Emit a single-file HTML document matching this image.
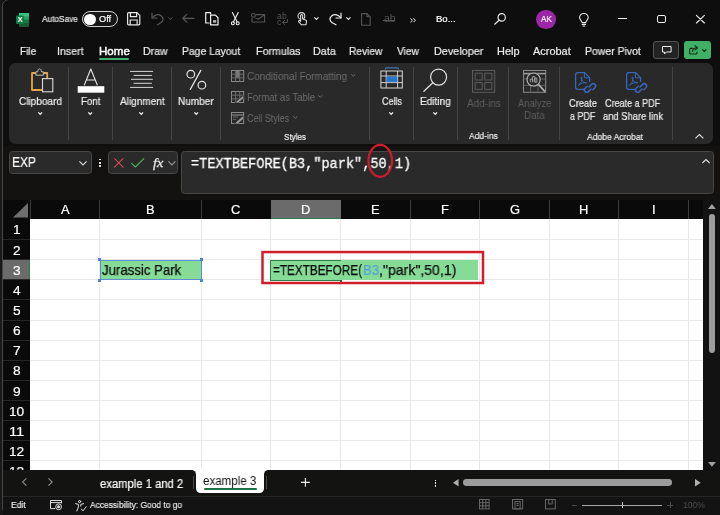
<!DOCTYPE html>
<html><head><meta charset="utf-8">
<style>
*{box-sizing:border-box;margin:0;padding:0}
html,body{width:720px;height:515px;overflow:hidden;background:#0e0e0e}
body{position:relative;font-family:"Liberation Sans",sans-serif;color:#fff;font-size:12px}
.a{position:absolute}
.t{position:absolute;white-space:nowrap;line-height:1;transform-origin:0 0;will-change:transform}
svg{position:absolute;overflow:visible}
.sep{position:absolute;width:1px;background:#444;top:67px;height:73px}
.vg{position:absolute;top:219px;height:251px;width:1px;background:#e8e8e8}
.hg{position:absolute;left:30px;width:673.3px;height:1px;background:#e8e8e8}
.chs{position:absolute;top:200px;height:19px;width:1px;background:#3c3c3c}
</style></head><body>

<!-- window left border -->
<div class="a" style="left:0;top:0;width:3px;height:515px;background:#191919"></div>
<div class="a" style="left:2.3px;top:-1px;width:724px;height:515.5px;border:1px solid #474747;border-radius:7px"></div>

<!-- TITLE BAR ICONS -->
<svg style="left:15.8px;top:12.5px" width="13" height="13.4" viewBox="0 0 13 13.4">
<rect x="3" y="0" width="10" height="13.4" rx="1.2" fill="#21a366"/>
<rect x="3" y="0" width="10" height="3.4" fill="#33c481"/>
<rect x="3" y="6.7" width="10" height="3.4" fill="#107c41"/>
<rect x="3" y="10" width="10" height="3.4" fill="#185c37"/>
<rect x="0" y="2.4" width="8" height="8.6" rx="0.8" fill="#107c41"/>
<text x="4" y="9.5" font-size="7.6" font-weight="bold" fill="#fff" text-anchor="middle" font-family="Liberation Sans, sans-serif">X</text>
</svg>
<div class="a" style="left:81.7px;top:11.3px;width:36px;height:15.6px;border:1.2px solid #d0d0d0;border-radius:8px;background:#161616"></div>
<div class="a" style="left:84.2px;top:13.6px;width:11.4px;height:11.4px;border-radius:6px;background:#fff"></div>
<!-- save -->
<svg style="left:127px;top:12px" width="13.4" height="13.4" viewBox="0 0 13.4 13.4" fill="none" stroke="#e8e8e8" stroke-width="1.2">
<path d="M0.6 1.6 a1 1 0 0 1 1 -1 H10 L12.8 3.4 V11.8 a1 1 0 0 1 -1 1 H1.6 a1 1 0 0 1 -1 -1 Z"/>
<path d="M3.4 0.6 V4.6 H9.6 V0.6"/><path d="M3.2 12.8 V8 H10.2 V12.8"/>
</svg>
<!-- undo dim -->
<svg style="left:150.8px;top:12px" width="13" height="13" viewBox="0 0 13 13" fill="none" stroke="#595959" stroke-width="1.2" stroke-linecap="round" stroke-linejoin="round">
<path d="M1 1.2 V6 H6"/><path d="M1.2 5.8 C3.2 2.6 7.6 1.6 10.4 4 C13 6.4 12.2 9.2 9.8 10.8 L6.4 12.8"/>
</svg>
<svg style="left:168px;top:17px" width="4.6" height="3" viewBox="0 0 4.6 3" fill="none" stroke="#595959" stroke-width="1"><path d="M0.3 0.4 L2.3 2.4 L4.3 0.4"/></svg>
<!-- back arrow dim -->
<svg style="left:181.7px;top:14px" width="12.6" height="8.6" viewBox="0 0 12.6 8.6" fill="none" stroke="#595959" stroke-width="1.2" stroke-linecap="round" stroke-linejoin="round"><path d="M12 4.3 H0.8 M4.8 0.4 L0.8 4.3 L4.8 8.2"/></svg>
<!-- paste/copy -->
<svg style="left:204.7px;top:12px" width="13.6" height="13.4" viewBox="0 0 13.6 13.4" fill="none" stroke="#f0f0f0" stroke-width="1.2" stroke-linejoin="round">
<path d="M4.6 11 H0.7 V0.7 H5.6 V2.6"/><path d="M5.6 3.2 H10.4 L13 5.8 V12.8 H5.6 Z" fill="#0e0e0e"/><rect x="8" y="8.2" width="3.2" height="2.4" fill="#bbb" stroke="none"/>
</svg>
<!-- scissors -->
<svg style="left:230.8px;top:12px" width="8.6" height="13.4" viewBox="0 0 8.6 13.4" fill="none" stroke="#f0f0f0" stroke-width="1.1" stroke-linecap="round">
<path d="M1.4 0.5 L6.2 10"/><path d="M7.2 0.5 L2.4 10"/><circle cx="1.9" cy="11.3" r="1.5"/><circle cx="6.7" cy="11.3" r="1.5"/>
</svg>
<!-- email dim -->
<svg style="left:250.8px;top:13px" width="14.2" height="9.6" viewBox="0 0 14.2 9.6" fill="none" stroke="#555" stroke-width="1.1">
<path d="M5 1.6 H13.6 V9 H1 V5"/><path d="M4.4 5 L7.4 6.2 L13.6 1.8"/><circle cx="2.4" cy="2.4" r="1.9"/>
</svg>
<!-- ab c dim -->
<div class="t" style="left:277px;top:11.6px;font-size:8.6px;color:#555;letter-spacing:.2px">ab</div>
<div class="t" style="left:277.4px;top:17.6px;font-size:8.6px;color:#555">c</div>
<svg style="left:282.4px;top:18.6px" width="6" height="6.4" viewBox="0 0 6 6.4" fill="none" stroke="#555" stroke-width="1" stroke-linecap="round" stroke-linejoin="round"><path d="M5.4 0.4 V3.4 H0.8 M2.6 1.4 L0.6 3.4 L2.6 5.4"/></svg>
<!-- touch -->
<svg style="left:296.7px;top:12px" width="10" height="13.4" viewBox="0 0 10 13.4" fill="none" stroke="#d8d8d8" stroke-width="1.1" stroke-linecap="round" stroke-linejoin="round">
<circle cx="4.4" cy="4" r="3.4"/><path d="M3.6 9.4 V3.6 a1 1 0 0 1 2 0 V7 L8.6 8 a1.2 1.2 0 0 1 .9 1.4 L9 12.8 H4.4 L1.6 9.6 a.9 .9 0 0 1 1.4 -1 Z" fill="#0e0e0e"/>
</svg>
<svg style="left:314px;top:17.4px" width="4.8" height="3" viewBox="0 0 4.8 3" fill="none" stroke="#e0e0e0" stroke-width="1.1"><path d="M0.3 0.4 L2.4 2.5 L4.5 0.4"/></svg>
<!-- redo -->
<svg style="left:328.8px;top:12px" width="12.6" height="13" viewBox="0 0 12.6 13" fill="none" stroke="#ececec" stroke-width="1.2" stroke-linecap="round" stroke-linejoin="round">
<path d="M12 1.2 V6 H7"/><path d="M11.8 5.8 C9.8 2.6 5.4 1.6 2.6 4 C0 6.4 0.8 9.2 3.2 10.8 L7 12.8"/>
</svg>
<svg style="left:345.8px;top:17.4px" width="4.8" height="3" viewBox="0 0 4.8 3" fill="none" stroke="#e0e0e0" stroke-width="1.1"><path d="M0.3 0.4 L2.4 2.5 L4.5 0.4"/></svg>
<!-- doc dim -->
<svg style="left:361px;top:12.5px" width="9.8" height="12.8" viewBox="0 0 9.8 12.8" fill="none" stroke="#555" stroke-width="1.1" stroke-linejoin="round"><path d="M0.6 0.6 H6 L9.2 3.8 V12.2 H0.6 Z"/><path d="M6 0.6 V3.8 H9.2"/></svg>
<!-- ab strike dim -->
<div class="t" style="left:383.6px;top:13.4px;font-size:10.5px;color:#555">ab</div>
<div class="a" style="left:382.5px;top:19.6px;width:12.8px;height:1px;background:#555"></div>
<!-- >> -->
<svg style="left:409.7px;top:17.5px" width="6.2" height="4.6" viewBox="0 0 6.2 4.6" fill="none" stroke="#f0f0f0" stroke-width="1"><path d="M0.4 0.3 L2.4 2.3 L0.4 4.3 M3.4 0.3 L5.4 2.3 L3.4 4.3"/></svg>
<!-- search -->
<svg style="left:494.2px;top:13.3px" width="12.2" height="11.8" viewBox="0 0 12.2 11.8" fill="none" stroke="#e8e8e8" stroke-width="1.2" stroke-linecap="round"><circle cx="7.7" cy="4.4" r="3.7"/><path d="M5 7.2 L0.7 11.2"/></svg>
<!-- avatar -->
<div class="a" style="left:536.4px;top:9.5px;width:19.6px;height:19.6px;border-radius:10px;background:#9b26a8"></div>
<!-- bulb -->
<svg style="left:579px;top:12.5px" width="9.8" height="13.4" viewBox="0 0 9.8 13.4" fill="none" stroke="#e8e8e8" stroke-width="1.1" stroke-linecap="round" stroke-linejoin="round">
<path d="M3 9.6 C3 7.6 0.6 7 0.6 4.6 A4.3 4.1 0 0 1 9.2 4.6 C9.2 7 6.8 7.6 6.8 9.6 Z"/><path d="M3.2 11.4 H6.6 M4 13 H5.8"/>
</svg>
<!-- window controls -->
<div class="a" style="left:618px;top:17.8px;width:8.8px;height:1.1px;background:#f0f0f0"></div>
<div class="a" style="left:656.7px;top:14.7px;width:9.2px;height:8.4px;border:1.2px solid #f0f0f0;border-radius:2px"></div>
<svg style="left:696.3px;top:14.7px" width="8.8" height="8.4" viewBox="0 0 8.8 8.4" stroke="#f0f0f0" stroke-width="1.1" stroke-linecap="round"><path d="M0.4 0.4 L8.4 8 M8.4 0.4 L0.4 8"/></svg>

<!-- TABS extras -->
<div class="a" style="left:99.3px;top:58.4px;width:30px;height:1.8px;background:#3fae6e;border-radius:1px"></div>
<div class="a" style="left:653.3px;top:40.7px;width:26px;height:18.6px;border:1px solid #555;border-radius:3px;background:#232323"></div>
<svg style="left:661.6px;top:46px" width="9.6" height="8.6" viewBox="0 0 9.6 8.6" fill="none" stroke="#f0f0f0" stroke-width="1" stroke-linejoin="round"><path d="M0.5 0.5 H9.1 V6 H4.4 L2.4 8 V6 H0.5 Z"/></svg>
<div class="a" style="left:684px;top:40.7px;width:26.8px;height:18.6px;border-radius:3px;background:#3fb065"></div>
<svg style="left:688.6px;top:45.2px" width="10" height="9.6" viewBox="0 0 10 9.6" fill="none" stroke="#0c2a16" stroke-width="1.1" stroke-linecap="round" stroke-linejoin="round"><path d="M3.4 3.4 H1.6 a1 1 0 0 0 -1 1 V8 a1 1 0 0 0 1 1 H7 a1 1 0 0 0 1 -1 V7"/><path d="M3.6 6.4 C3.8 4 5.4 2.8 7.2 2.8 M6 0.6 L8.6 2.8 L6 5"/></svg>
<svg style="left:702.4px;top:48.6px" width="4.6" height="3" viewBox="0 0 4.6 3" fill="none" stroke="#0c2a16" stroke-width="1.1"><path d="M0.3 0.4 L2.3 2.4 L4.3 0.4"/></svg>

<!-- RIBBON -->
<div class="a" style="left:9px;top:63px;width:704px;height:81px;background:#292929;border-radius:6.5px"></div>
<div class="sep" style="left:68px"></div>
<div class="sep" style="left:112px"></div>
<div class="sep" style="left:171px"></div>
<div class="sep" style="left:220px"></div>
<div class="sep" style="left:369px"></div>
<div class="sep" style="left:413px"></div>
<div class="sep" style="left:457px"></div>
<div class="sep" style="left:508px"></div>
<div class="sep" style="left:559px"></div>
<div class="sep" style="left:671.5px"></div>
<!-- clipboard -->
<svg style="left:30px;top:67px" width="25" height="27" viewBox="30 67 25 27" fill="none">
<path d="M37 73 H32 V90 H42" stroke="#e9a53f" stroke-width="1.8" stroke-linejoin="round"/>
<path d="M42.4 73 H47.2 V78" stroke="#e9a53f" stroke-width="1.8" stroke-linejoin="round"/>
<path d="M35.8 75.2 V71.8 H37.8 C37.8 70 38.5 68.8 39.6 68.8 C40.7 68.8 41.4 70 41.4 71.8 H43.4 V75.2 Z" stroke="#bdbdbd" stroke-width="1" fill="#292929" stroke-linejoin="round"/>
<rect x="42.5" y="78.6" width="10.3" height="13.2" stroke="#dadada" stroke-width="1.1" fill="#2d2d2d"/>
</svg>
<svg style="left:38px;top:112.4px" width="4.4" height="2.8" viewBox="0 0 4.4 2.8" fill="none" stroke="#f0f0f0" stroke-width="1.25"><path d="M0.3 0.4 L2.2 2.3 L4.1 0.4"/></svg>
<!-- font -->
<svg style="left:77px;top:67px" width="28" height="27" viewBox="77 67 28 27" fill="none">
<path d="M84.2 85.3 L90.8 69 L97.4 85.3 M86.4 80 H95.2" stroke="#e4e4e4" stroke-width="1.1" stroke-linejoin="round"/>
<rect x="77.7" y="86.2" width="26.6" height="6.5" fill="#fff"/>
</svg>
<svg style="left:88.2px;top:112.4px" width="4.4" height="2.8" viewBox="0 0 4.4 2.8" fill="none" stroke="#f0f0f0" stroke-width="1.25"><path d="M0.3 0.4 L2.2 2.3 L4.1 0.4"/></svg>
<!-- alignment -->
<svg style="left:129px;top:69px" width="26" height="21" viewBox="129 69 26 21" stroke="#d6d6d6" stroke-width="1">
<path d="M130.1 71.4 H153.1 M133.6 75.4 H151.9 M131 79.3 H152.8 M133.6 83.3 H151.9 M130.1 87.4 H153.1"/>
</svg>
<svg style="left:139.2px;top:112.4px" width="4.4" height="2.8" viewBox="0 0 4.4 2.8" fill="none" stroke="#f0f0f0" stroke-width="1.25"><path d="M0.3 0.4 L2.2 2.3 L4.1 0.4"/></svg>
<!-- percent -->
<svg style="left:185px;top:68px" width="23" height="23" viewBox="185 68 23 23" fill="none" stroke="#e6e6e6" stroke-width="1.2" stroke-linecap="round">
<circle cx="190.8" cy="74.2" r="3.8"/><circle cx="201.9" cy="85.2" r="3.8"/><path d="M200.8 70.4 L190.3 89.4"/>
</svg>
<svg style="left:193.5px;top:112.4px" width="4.4" height="2.8" viewBox="0 0 4.4 2.8" fill="none" stroke="#f0f0f0" stroke-width="1.25"><path d="M0.3 0.4 L2.2 2.3 L4.1 0.4"/></svg>
<!-- styles small icons -->
<svg style="left:230.8px;top:70px" width="13.2" height="12" viewBox="0 0 13.2 12" fill="none" stroke="#8a8a8a" stroke-width="1">
<rect x="0.5" y="0.5" width="12.2" height="11"/><path d="M0.5 4.2 H12.7 M0.5 7.9 H12.7 M4.6 0.5 V11.5 M8.7 0.5 V11.5" stroke="#6a6a6a"/><rect x="5" y="1" width="3.4" height="6.6" fill="#777" stroke="none"/>
</svg>
<svg style="left:230.8px;top:91.3px" width="13.2" height="12" viewBox="0 0 13.2 12" fill="none" stroke="#8a8a8a" stroke-width="1">
<rect x="0.5" y="0.5" width="12.2" height="11"/><path d="M0.5 4.2 H12.7 M0.5 7.9 H12.7 M4.6 0.5 V11.5 M8.7 0.5 V11.5" stroke="#6a6a6a"/><path d="M4 11.5 L12.2 4.4 L13 7 L7 12 Z" fill="#999" stroke="#292929" stroke-width=".6"/>
</svg>
<svg style="left:230.8px;top:112.2px" width="13.2" height="12" viewBox="0 0 13.2 12" fill="none" stroke="#8a8a8a" stroke-width="1">
<rect x="0.5" y="0.5" width="12.2" height="11"/><path d="M0.5 3 H12.7" stroke="#9a9a9a"/><path d="M3.4 11.5 L12 3.8 L13 6.6 L6.6 12 Z" fill="#999" stroke="#292929" stroke-width=".6"/><path d="M2 5 H7 M2 7.4 H5" stroke="#666"/>
</svg>
<svg style="left:350.8px;top:74.4px" width="4.6" height="2.8" viewBox="0 0 4.6 2.8" fill="none" stroke="#707070" stroke-width="1"><path d="M0.3 0.4 L2.3 2.3 L4.3 0.4"/></svg>
<svg style="left:317.9px;top:95.4px" width="4.6" height="2.8" viewBox="0 0 4.6 2.8" fill="none" stroke="#707070" stroke-width="1"><path d="M0.3 0.4 L2.3 2.3 L4.3 0.4"/></svg>
<svg style="left:292.9px;top:116.4px" width="4.6" height="2.8" viewBox="0 0 4.6 2.8" fill="none" stroke="#707070" stroke-width="1"><path d="M0.3 0.4 L2.3 2.3 L4.3 0.4"/></svg>
<!-- cells -->
<svg style="left:379px;top:66px" width="25" height="24" viewBox="379 66 25 24" fill="none">
<path d="M385.6 69.4 V67.9 H398.2 V69.4" stroke="#3b8ad8" stroke-width="1"/>
<rect x="380.9" y="71" width="21.4" height="17" stroke="#d8d8d8" stroke-width="1"/>
<path d="M380.9 76 H402.3 M380.9 82.6 H402.3 M386.2 71 V88 M397.6 71 V88" stroke="#cfcfcf" stroke-width="1"/>
<rect x="386.7" y="76.5" width="10.4" height="5.6" fill="#2278cf"/>
</svg>
<svg style="left:389.2px;top:112.4px" width="4.4" height="2.8" viewBox="0 0 4.4 2.8" fill="none" stroke="#f0f0f0" stroke-width="1.25"><path d="M0.3 0.4 L2.2 2.3 L4.1 0.4"/></svg>
<!-- editing -->
<svg style="left:422px;top:67px" width="27" height="26" viewBox="422 67 27 26" fill="none" stroke="#e2e2e2" stroke-width="1.2" stroke-linecap="round">
<circle cx="438.6" cy="77.1" r="8"/><path d="M432.8 82.8 L423.9 91.3"/>
</svg>
<svg style="left:433.2px;top:112.4px" width="4.4" height="2.8" viewBox="0 0 4.4 2.8" fill="none" stroke="#f0f0f0" stroke-width="1.25"><path d="M0.3 0.4 L2.2 2.3 L4.1 0.4"/></svg>
<!-- add-ins dim -->
<svg style="left:472px;top:70px" width="23.2" height="22.8" viewBox="0 0 23.2 22.8" fill="none" stroke="#5c5c5c" stroke-width="1">
<rect x="0.5" y="0.5" width="22.2" height="21.8"/><rect x="3.2" y="3.2" width="7" height="6.8"/><rect x="12.8" y="3.2" width="7" height="6.8"/><rect x="3.2" y="12.6" width="7" height="6.8"/><rect x="12.8" y="12.6" width="7" height="6.8"/>
</svg>
<!-- analyze data -->
<svg style="left:522.6px;top:70px" width="23.2" height="22.8" viewBox="0 0 23.2 22.8" fill="none" stroke="#7a7a7a" stroke-width="1">
<rect x="0.5" y="0.5" width="22.2" height="21.8" stroke="#8a8a8a"/><path d="M0.5 3.6 H22.7" stroke="#9a9a9a" stroke-width="1.6"/><path d="M0.5 9 H22.7 M0.5 15.4 H22.7 M7.6 3.6 V22.3 M15 3.6 V22.3" stroke="#5e5e5e"/>
<circle cx="10.6" cy="9.6" r="6.6" fill="#292929" stroke="#b0b0b0" stroke-width="1.2"/><path d="M15.4 14.4 L22 21.6" stroke="#b0b0b0" stroke-width="1.6"/>
<path d="M7.4 12.2 V9 H9.6 V12.2 M9.6 12.2 V6.6 H11.8 V12.2 M11.8 12.2 V8.2 H13.8 V12.2 Z" stroke="#a8a8a8" stroke-width=".9"/>
</svg>
<!-- pdf icons -->
<svg style="left:574.5px;top:71.5px" width="21.6" height="23" viewBox="0 0 21.6 23" fill="none" stroke="#3768bb" stroke-width="1.3" stroke-linecap="round" stroke-linejoin="round">
<path d="M9 17.4 H2.6 a2 2 0 0 1 -2 -2 V2.6 a2 2 0 0 1 2 -2 H9.6 L14.6 5.6 V9.4"/><path d="M9.4 0.8 V5.8 H14.4" stroke-width="1"/>
<path d="M3.6 13.2 C6 11.6 7.2 8.4 7 5.6 C6.9 4.4 5.8 4.6 6 5.8 C6.4 8.2 8.4 10.6 11 11.2 C12 11.4 12 10.4 11 10.4 C8.6 10.4 5.2 11.6 3.6 13.2 Z" stroke-width=".9"/>
<path d="M14 15 L16.6 12.4 a2.3 2.3 0 0 1 3.3 3.3 L17.8 17.8 M16 17 L13.4 19.6 a2.3 2.3 0 0 1 -3.3 -3.3 L12.2 14.2" stroke-width="1.5"/>
</svg>
<svg style="left:625.6px;top:71.5px" width="21.6" height="23" viewBox="0 0 21.6 23" fill="none" stroke="#3768bb" stroke-width="1.3" stroke-linecap="round" stroke-linejoin="round">
<path d="M9 17.4 H2.6 a2 2 0 0 1 -2 -2 V2.6 a2 2 0 0 1 2 -2 H9.6 L14.6 5.6 V9.4"/><path d="M9.4 0.8 V5.8 H14.4" stroke-width="1"/>
<path d="M3.6 13.2 C6 11.6 7.2 8.4 7 5.6 C6.9 4.4 5.8 4.6 6 5.8 C6.4 8.2 8.4 10.6 11 11.2 C12 11.4 12 10.4 11 10.4 C8.6 10.4 5.2 11.6 3.6 13.2 Z" stroke-width=".9"/>
<path d="M14 15 L16.6 12.4 a2.3 2.3 0 0 1 3.3 3.3 L17.8 17.8 M16 17 L13.4 19.6 a2.3 2.3 0 0 1 -3.3 -3.3 L12.2 14.2" stroke-width="1.5"/>
</svg>
<!-- collapse chevron -->
<svg style="left:695.2px;top:133.8px" width="8.8" height="4.8" viewBox="0 0 8.8 4.8" fill="none" stroke="#e0e0e0" stroke-width="1.1"><path d="M0.4 4.4 L4.4 0.5 L8.4 4.4"/></svg>


<!-- FORMULA BAR -->
<div class="a" style="left:3px;top:146px;width:717px;height:54px;background:#131210"></div>
<div class="a" style="left:9.2px;top:151.3px;width:82.8px;height:23px;background:#2a2a2a;border:1px solid #474747;border-radius:3.5px"></div>
<svg style="left:79.2px;top:161.3px" width="8" height="4.6" viewBox="0 0 8 4.6" fill="none" stroke="#d8d8d8" stroke-width="1.1"><path d="M0.4 0.4 L4 4 L7.6 0.4"/></svg>
<div class="a" style="left:99px;top:158.8px;width:1.5px;height:1.5px;background:#e0e0e0"></div>
<div class="a" style="left:99px;top:162.1px;width:1.5px;height:1.5px;background:#e0e0e0"></div>
<div class="a" style="left:99px;top:165.4px;width:1.5px;height:1.5px;background:#e0e0e0"></div>
<div class="a" style="left:108px;top:151.3px;width:69.6px;height:23px;background:#2a2a2a;border:1px solid #474747;border-radius:3.5px"></div>
<svg style="left:113.7px;top:158px" width="9.6" height="9.6" viewBox="0 0 9.6 9.6" stroke="#e05050" stroke-width="1.05" stroke-linecap="round"><path d="M0.5 0.5 L9.1 9.1 M9.1 0.5 L0.5 9.1"/></svg>
<svg style="left:131.3px;top:157.5px" width="13.4" height="9.6" viewBox="0 0 13.4 9.6" fill="none" stroke="#4fb35a" stroke-width="1.1" stroke-linecap="round" stroke-linejoin="round"><path d="M0.6 5.4 L4.4 9 L12.8 0.6"/></svg>
<svg style="left:168px;top:161.2px" width="7.8" height="4.6" viewBox="0 0 7.8 4.6" fill="none" stroke="#9a9a9a" stroke-width="1.1"><path d="M0.4 0.4 L3.9 3.9 L7.4 0.4"/></svg>
<div class="a" style="left:181.3px;top:151.3px;width:533px;height:42.8px;background:#2a2a2a;border:1px solid #474747;border-radius:3.5px"></div>
<svg style="left:702px;top:159.2px" width="8" height="4.4" viewBox="0 0 8 4.4" fill="none" stroke="#e0e0e0" stroke-width="1.1"><path d="M0.4 4 L4 0.5 L7.6 4"/></svg>

<!-- GRID -->
<div class="a" style="left:3px;top:200px;width:717px;height:19.4px;background:#0a0a0a"></div>
<div class="a" style="left:3px;top:219px;width:27.3px;height:251px;background:#0a0a0a"></div>
<div class="a" style="left:30.3px;top:219.2px;width:673px;height:250.8px;background:#fff"></div>
<div class="a" style="left:703.3px;top:200px;width:16.7px;height:270px;background:#121212"></div>
<svg style="left:13px;top:203px" width="15" height="14.5" viewBox="0 0 15 14.5"><path d="M15 0 V14.5 H0 Z" fill="#6e6e6e"/></svg>
<div class="a" style="left:270.5px;top:200px;width:70.3px;height:19.3px;background:#6b6b6b"></div>
<div class="a" style="left:270.5px;top:217.6px;width:70.3px;height:1.8px;background:#2d7a50"></div>
<div class="a" style="left:3px;top:259.5px;width:27.3px;height:20.2px;background:#6b6b6b"></div>
<div class="a" style="left:28.8px;top:259.5px;width:1.6px;height:20.2px;background:#2d7a50"></div>
<div class="a" style="left:3px;top:239.0px;width:27px;height:1px;background:#262626"></div>
<div class="a" style="left:3px;top:259.0px;width:27px;height:1px;background:#262626"></div>
<div class="a" style="left:3px;top:279.2px;width:27px;height:1px;background:#262626"></div>
<div class="a" style="left:3px;top:299.3px;width:27px;height:1px;background:#262626"></div>
<div class="a" style="left:3px;top:319.5px;width:27px;height:1px;background:#262626"></div>
<div class="a" style="left:3px;top:339.5px;width:27px;height:1px;background:#262626"></div>
<div class="a" style="left:3px;top:359.7px;width:27px;height:1px;background:#262626"></div>
<div class="a" style="left:3px;top:379.8px;width:27px;height:1px;background:#262626"></div>
<div class="a" style="left:3px;top:399.9px;width:27px;height:1px;background:#262626"></div>
<div class="a" style="left:3px;top:420.0px;width:27px;height:1px;background:#262626"></div>
<div class="a" style="left:3px;top:440.1px;width:27px;height:1px;background:#262626"></div>
<div class="a" style="left:3px;top:460.2px;width:27px;height:1px;background:#262626"></div>
<div class="chs" style="left:30px"></div>
<div class="chs" style="left:99px"></div>
<div class="chs" style="left:201px"></div>
<div class="chs" style="left:549px"></div>
<div class="chs" style="left:410px"></div>
<div class="chs" style="left:479px"></div>
<div class="chs" style="left:618px"></div>
<div class="chs" style="left:688px"></div>
<div class="vg" style="left:99.0px"></div>
<div class="vg" style="left:200.8px"></div>
<div class="vg" style="left:270.0px"></div>
<div class="vg" style="left:340.3px"></div>
<div class="vg" style="left:409.5px"></div>
<div class="vg" style="left:479.0px"></div>
<div class="vg" style="left:548.5px"></div>
<div class="vg" style="left:618.2px"></div>
<div class="vg" style="left:687.8px"></div>
<div class="hg" style="top:239.0px"></div>
<div class="hg" style="top:259.0px"></div>
<div class="hg" style="top:279.2px"></div>
<div class="hg" style="top:299.3px"></div>
<div class="hg" style="top:319.5px"></div>
<div class="hg" style="top:339.5px"></div>
<div class="hg" style="top:359.7px"></div>
<div class="hg" style="top:379.8px"></div>
<div class="hg" style="top:399.9px"></div>
<div class="hg" style="top:420.0px"></div>
<div class="hg" style="top:440.1px"></div>
<div class="hg" style="top:460.2px"></div>

<!-- B3 -->
<div class="a" style="left:99.5px;top:259.5px;width:102px;height:20.6px;background:#86dc97;border:1px solid #5a8fd2"></div>
<div class="a" style="left:98.2px;top:258.2px;width:3px;height:3px;background:#4f84cc"></div>
<div class="a" style="left:200px;top:258.2px;width:3px;height:3px;background:#4f84cc"></div>
<div class="a" style="left:98.2px;top:278.6px;width:3px;height:3px;background:#4f84cc"></div>
<div class="a" style="left:200px;top:278.6px;width:3px;height:3px;background:#4f84cc"></div>
<!-- D3 edit -->
<div class="a" style="left:270.3px;top:259.7px;width:207.7px;height:20.6px;background:#86dc97"></div>
<div class="a" style="left:270.3px;top:259.5px;width:70.6px;height:21px;border:1.2px solid #2f8247;border-right:none"></div>
<div class="a" style="left:339.8px;top:279.8px;width:2.2px;height:2.2px;background:#1e6b3a"></div>

<!-- v scrollbar -->
<svg style="left:708px;top:204.2px" width="7.8" height="5" viewBox="0 0 7.8 5"><path d="M0 5 L3.9 0 L7.8 5 Z" fill="#a0a0a0"/></svg>
<div class="a" style="left:708.7px;top:214.2px;width:6.3px;height:138.4px;border-radius:3.2px;background:#9c9c9c"></div>
<svg style="left:707.9px;top:462.3px" width="7.9" height="4.8" viewBox="0 0 7.9 4.8"><path d="M0 0 L3.95 4.8 L7.9 0 Z" fill="#a0a0a0"/></svg>

<!-- SHEET TABS -->
<div class="a" style="left:190px;top:469px;width:80px;height:8px;background:#fff"></div>
<div class="a" style="left:3px;top:470px;width:193.3px;height:26.3px;background:#131411;border-top-right-radius:4.5px"></div>
<div class="a" style="left:263.8px;top:470px;width:456.2px;height:26.3px;background:#131411;border-top-left-radius:4.5px"></div>
<div class="a" style="left:190px;top:490px;width:80px;height:6.3px;background:#131411"></div>
<svg style="left:21.9px;top:478.3px" width="4.8" height="8" viewBox="0 0 4.8 8" fill="none" stroke="#8c8c8c" stroke-width="1.1"><path d="M4.4 0.4 L0.6 4 L4.4 7.6"/></svg>
<svg style="left:48.3px;top:478.3px" width="4.8" height="8" viewBox="0 0 4.8 8" fill="none" stroke="#8c8c8c" stroke-width="1.1"><path d="M0.4 0.4 L4.2 4 L0.4 7.6"/></svg>
<div class="a" style="left:193.3px;top:476px;width:1px;height:13.4px;background:#4c4c4c"></div>
<div class="a" style="left:196.3px;top:469px;width:67.5px;height:23.5px;background:#fff;border-radius:0 0 4.5px 4.5px"></div>
<div class="a" style="left:203.5px;top:488px;width:53px;height:2px;background:#1f7145;border-radius:1px"></div>
<div class="a" style="left:266.3px;top:476px;width:1px;height:13.4px;background:#4c4c4c"></div>
<svg style="left:301.3px;top:478.1px" width="8.8" height="8.8" viewBox="0 0 8.8 8.8" stroke="#f0f0f0" stroke-width="1.1"><path d="M4.4 0 V8.8 M0 4.4 H8.8"/></svg>
<div class="a" style="left:434.9px;top:479.6px;width:1.5px;height:1.5px;background:#f0f0f0"></div>
<div class="a" style="left:434.9px;top:482.4px;width:1.5px;height:1.5px;background:#f0f0f0"></div>
<div class="a" style="left:434.9px;top:485.2px;width:1.5px;height:1.5px;background:#f0f0f0"></div>
<svg style="left:452.9px;top:479px" width="5.6" height="7.4" viewBox="0 0 5.6 7.4"><path d="M5.6 0 V7.4 L0 3.7 Z" fill="#b0b0b0"/></svg>
<div class="a" style="left:462.7px;top:479px;width:209px;height:6.8px;border-radius:3.4px;background:#9c9c9c"></div>
<svg style="left:695px;top:479px" width="5.8" height="7.4" viewBox="0 0 5.8 7.4"><path d="M0 0 V7.4 L5.8 3.7 Z" fill="#b0b0b0"/></svg>

<!-- STATUS -->
<div class="a" style="left:3px;top:496.3px;width:717px;height:18.7px;background:#131313"></div>
<div class="a" style="left:3px;top:496px;width:717px;height:1px;background:#262626"></div>
<!-- macro icon -->
<svg style="left:50px;top:500.4px" width="12.2" height="10" viewBox="0 0 12.2 10" fill="none" stroke="#e0e0e0" stroke-width="1">
<path d="M5 8.6 H0.5 V0.5 H11.5 V3.4 M0.5 2.6 H11.5"/><circle cx="8.6" cy="6.8" r="2.9"/><circle cx="8.6" cy="6.8" r="1.1" fill="#e0e0e0"/>
</svg>
<!-- accessibility icon -->
<svg style="left:75.4px;top:499.6px" width="11.8" height="11.8" viewBox="0 0 11.8 11.8" fill="none" stroke="#e0e0e0" stroke-width="1" stroke-linecap="round" stroke-linejoin="round">
<circle cx="4.6" cy="1.6" r="1.1"/><path d="M0.6 3.6 L3.4 4.4 V7 L1.8 11 M8.6 3.6 L5.8 4.4 V6.2 M6.4 9 L8 10.8 L11.2 6.8"/>
</svg>
<!-- view icons dim -->
<svg style="left:479.4px;top:499.4px" width="10.6" height="10.4" viewBox="0 0 10.6 10.4" fill="none" stroke="#666" stroke-width="1"><rect x="0.5" y="0.5" width="9.6" height="9.4"/><path d="M0.5 3.6 H10.1 M0.5 6.8 H10.1 M3.7 0.5 V9.9 M6.9 0.5 V9.9"/></svg>
<svg style="left:512.3px;top:499.4px" width="11.2" height="10.4" viewBox="0 0 11.2 10.4" fill="none" stroke="#666" stroke-width="1"><rect x="0.5" y="0.5" width="10.2" height="9.4"/><rect x="3" y="2.6" width="5.2" height="7.3"/><path d="M4.4 4.6 H6.8 M4.4 6.4 H6.8"/></svg>
<svg style="left:545px;top:499.4px" width="10.8" height="10.4" viewBox="0 0 10.8 10.4" fill="none" stroke="#666" stroke-width="1"><rect x="0.5" y="0.5" width="9.8" height="9.4"/><path d="M3.6 0.5 V5 H7.2 V0.5"/></svg>

<div class="a" style="left:582px;top:504.5px;width:80.3px;height:1px;background:#a8a8a8"></div>
<div class="a" style="left:621.5px;top:502.3px;width:1.2px;height:5.4px;background:#c8c8c8"></div>
<div class="a" style="left:571.7px;top:504.5px;width:5.6px;height:1px;background:#4a4a4a"></div>
<div class="a" style="left:667.3px;top:504.5px;width:5.6px;height:1px;background:#4a4a4a"></div>
<div class="a" style="left:669.6px;top:502.2px;width:1px;height:5.6px;background:#4a4a4a"></div>

<div class="t" style="left:41.70px;top:15.02px;font-size:8.7px;color:#e6e6e6;transform:scaleX(0.9530);-webkit-text-stroke:0.2px #e6e6e6">AutoSave</div>
<div class="t" style="left:99.47px;top:15.02px;font-size:8.7px;color:#fff;transform:scaleX(1.0636);-webkit-text-stroke:0.2px #fff">Off</div>
<div class="t" style="left:435.91px;top:15.07px;font-size:9px;color:#fff;transform:scaleX(1.0588);-webkit-text-stroke:0.2px #fff">Bo...</div>
<div class="t" style="left:541.00px;top:15.63px;font-size:8.2px;color:#fff;transform:scaleX(0.9860);-webkit-text-stroke:0.2px #fff">AK</div>
<div class="t" style="left:20.00px;top:46.21px;font-size:10.9px;color:#ededed;transform:scaleX(0.9273);-webkit-text-stroke:0.2px #ededed">File</div>
<div class="t" style="left:56.72px;top:46.21px;font-size:10.9px;color:#ededed;transform:scaleX(0.9752);-webkit-text-stroke:0.2px #ededed">Insert</div>
<div class="t" style="left:98.50px;top:46.21px;font-size:10.9px;color:#fff;transform:scaleX(1.0607);-webkit-text-stroke:0.45px #fff">Home</div>
<div class="t" style="left:142.57px;top:46.21px;font-size:10.9px;color:#ededed;transform:scaleX(0.9697);-webkit-text-stroke:0.2px #ededed">Draw</div>
<div class="t" style="left:181.99px;top:46.21px;font-size:10.9px;color:#ededed;transform:scaleX(0.9521);-webkit-text-stroke:0.2px #ededed">Page Layout</div>
<div class="t" style="left:255.97px;top:46.21px;font-size:10.9px;color:#ededed;transform:scaleX(0.9785);-webkit-text-stroke:0.2px #ededed">Formulas</div>
<div class="t" style="left:313.26px;top:46.21px;font-size:10.9px;color:#ededed;transform:scaleX(0.9888);-webkit-text-stroke:0.2px #ededed">Data</div>
<div class="t" style="left:349.30px;top:46.21px;font-size:10.9px;color:#ededed;transform:scaleX(0.9343);-webkit-text-stroke:0.2px #ededed">Review</div>
<div class="t" style="left:397.30px;top:46.21px;font-size:10.9px;color:#ededed;transform:scaleX(0.9362);-webkit-text-stroke:0.2px #ededed">View</div>
<div class="t" style="left:433.56px;top:46.21px;font-size:10.9px;color:#ededed;transform:scaleX(0.9928);-webkit-text-stroke:0.2px #ededed">Developer</div>
<div class="t" style="left:496.95px;top:46.21px;font-size:10.9px;color:#ededed;transform:scaleX(1.0024);-webkit-text-stroke:0.2px #ededed">Help</div>
<div class="t" style="left:533.30px;top:46.21px;font-size:10.9px;color:#ededed;transform:scaleX(1.0053);-webkit-text-stroke:0.2px #ededed">Acrobat</div>
<div class="t" style="left:585.28px;top:46.21px;font-size:10.9px;color:#ededed;transform:scaleX(0.9607);-webkit-text-stroke:0.2px #ededed">Power Pivot</div>
<div class="t" style="left:18.73px;top:95.75px;font-size:10.6px;color:#f0f0f0;transform:scaleX(0.9469);-webkit-text-stroke:0.2px #f0f0f0">Clipboard</div>
<div class="t" style="left:80.91px;top:95.75px;font-size:10.6px;color:#f0f0f0;transform:scaleX(0.9171);-webkit-text-stroke:0.2px #f0f0f0">Font</div>
<div class="t" style="left:119.60px;top:95.75px;font-size:10.6px;color:#f0f0f0;transform:scaleX(0.9468);-webkit-text-stroke:0.2px #f0f0f0">Alignment</div>
<div class="t" style="left:177.89px;top:95.75px;font-size:10.6px;color:#f0f0f0;transform:scaleX(0.9469);-webkit-text-stroke:0.2px #f0f0f0">Number</div>
<div class="t" style="left:247.23px;top:71.45px;font-size:10.6px;color:#6d6d6d;transform:scaleX(0.9384)">Conditional Formatting</div>
<div class="t" style="left:247.02px;top:92.25px;font-size:10.6px;color:#6d6d6d;transform:scaleX(0.9007)">Format as Table</div>
<div class="t" style="left:247.28px;top:113.25px;font-size:10.6px;color:#6d6d6d;transform:scaleX(0.8426)">Cell Styles</div>
<div class="t" style="left:284.18px;top:131.68px;font-size:9.6px;color:#f0f0f0;transform:scaleX(0.8396);-webkit-text-stroke:0.2px #f0f0f0">Styles</div>
<div class="t" style="left:381.78px;top:95.75px;font-size:10.6px;color:#f0f0f0;transform:scaleX(0.8440);-webkit-text-stroke:0.2px #f0f0f0">Cells</div>
<div class="t" style="left:420.09px;top:95.75px;font-size:10.6px;color:#f0f0f0;transform:scaleX(0.9516);-webkit-text-stroke:0.2px #f0f0f0">Editing</div>
<div class="t" style="left:466.60px;top:97.55px;font-size:10.6px;color:#5e5e5e;transform:scaleX(0.9437)">Add-ins</div>
<div class="t" style="left:468.90px;top:131.38px;font-size:9.6px;color:#f0f0f0;transform:scaleX(0.8868);-webkit-text-stroke:0.2px #f0f0f0">Add-ins</div>
<div class="t" style="left:517.80px;top:97.55px;font-size:10.6px;color:#5e5e5e;transform:scaleX(0.8859)">Analyze</div>
<div class="t" style="left:523.51px;top:109.75px;font-size:10.6px;color:#5e5e5e;transform:scaleX(0.9241)">Data</div>
<div class="t" style="left:568.76px;top:97.75px;font-size:10.6px;color:#f0f0f0;transform:scaleX(0.8780);-webkit-text-stroke:0.2px #f0f0f0">Create</div>
<div class="t" style="left:569.98px;top:110.85px;font-size:10.6px;color:#f0f0f0;transform:scaleX(0.8444);-webkit-text-stroke:0.2px #f0f0f0">a PDF</div>
<div class="t" style="left:605.47px;top:97.75px;font-size:10.6px;color:#f0f0f0;transform:scaleX(0.8516);-webkit-text-stroke:0.2px #f0f0f0">Create a PDF</div>
<div class="t" style="left:602.66px;top:110.85px;font-size:10.6px;color:#f0f0f0;transform:scaleX(0.8862);-webkit-text-stroke:0.2px #f0f0f0">and Share link</div>
<div class="t" style="left:587.10px;top:131.58px;font-size:9.6px;color:#f0f0f0;transform:scaleX(0.8905);-webkit-text-stroke:0.2px #f0f0f0">Adobe Acrobat</div>
<div class="t" style="left:12.43px;top:156.12px;font-size:13.8px;color:#fff;transform:scaleX(0.8654);-webkit-text-stroke:0.2px #fff">EXP</div>
<div class="t" style="left:153.03px;top:156.11px;font-size:13.2px;color:#e4e4e4;transform:scaleX(1.0811);font-family:'Liberation Serif',serif;font-style:italic;-webkit-text-stroke:0.3px #e4e4e4">fx</div>
<div class="t" style="left:190.59px;top:157.13px;font-size:14.3px;color:#fff;transform:scaleX(0.9505);font-family:'Liberation Mono',monospace;-webkit-text-stroke:0.3px #fff">=TEXTBEFORE(B3,"park",50,1)</div>
<div class="t" style="left:60.65px;top:204.06px;font-size:12.9px;color:#fff;transform:scaleX(1.0000);-webkit-text-stroke:0.2px #fff">A</div>
<div class="t" style="left:145.90px;top:204.06px;font-size:12.9px;color:#fff;transform:scaleX(1.0000);-webkit-text-stroke:0.2px #fff">B</div>
<div class="t" style="left:231.28px;top:204.06px;font-size:12.9px;color:#fff;transform:scaleX(1.0000);-webkit-text-stroke:0.2px #fff">C</div>
<div class="t" style="left:300.77px;top:204.06px;font-size:12.9px;color:#fff;transform:scaleX(1.0000);-webkit-text-stroke:0.2px #fff">D</div>
<div class="t" style="left:370.90px;top:204.06px;font-size:12.9px;color:#fff;transform:scaleX(1.0000);-webkit-text-stroke:0.2px #fff">E</div>
<div class="t" style="left:440.50px;top:204.06px;font-size:12.9px;color:#fff;transform:scaleX(1.0000);-webkit-text-stroke:0.2px #fff">F</div>
<div class="t" style="left:509.50px;top:204.06px;font-size:12.9px;color:#fff;transform:scaleX(1.0000);-webkit-text-stroke:0.2px #fff">G</div>
<div class="t" style="left:579.23px;top:204.06px;font-size:12.9px;color:#fff;transform:scaleX(1.0000);-webkit-text-stroke:0.2px #fff">H</div>
<div class="t" style="left:651.62px;top:204.06px;font-size:12.9px;color:#fff;transform:scaleX(1.0000);-webkit-text-stroke:0.2px #fff">I</div>
<div class="t" style="left:12.60px;top:223.40px;font-size:13.7px;color:#fff;transform:scaleX(1.0000);-webkit-text-stroke:0.2px #fff">1</div>
<div class="t" style="left:12.73px;top:243.70px;font-size:13.7px;color:#fff;transform:scaleX(1.0000);-webkit-text-stroke:0.2px #fff">2</div>
<div class="t" style="left:12.85px;top:263.70px;font-size:13.7px;color:#fff;transform:scaleX(1.0000);-webkit-text-stroke:0.2px #fff">3</div>
<div class="t" style="left:12.85px;top:283.90px;font-size:13.7px;color:#fff;transform:scaleX(1.0000);-webkit-text-stroke:0.2px #fff">4</div>
<div class="t" style="left:12.85px;top:304.00px;font-size:13.7px;color:#fff;transform:scaleX(1.0000);-webkit-text-stroke:0.2px #fff">5</div>
<div class="t" style="left:12.73px;top:324.20px;font-size:13.7px;color:#fff;transform:scaleX(1.0000);-webkit-text-stroke:0.2px #fff">6</div>
<div class="t" style="left:12.73px;top:344.20px;font-size:13.7px;color:#fff;transform:scaleX(1.0000);-webkit-text-stroke:0.2px #fff">7</div>
<div class="t" style="left:12.85px;top:364.40px;font-size:13.7px;color:#fff;transform:scaleX(1.0000);-webkit-text-stroke:0.2px #fff">8</div>
<div class="t" style="left:12.85px;top:384.50px;font-size:13.7px;color:#fff;transform:scaleX(1.0000);-webkit-text-stroke:0.2px #fff">9</div>
<div class="t" style="left:8.82px;top:404.60px;font-size:13.7px;color:#fff;transform:scaleX(0.9818);-webkit-text-stroke:0.2px #fff">10</div>
<div class="t" style="left:8.72px;top:424.70px;font-size:13.7px;color:#fff;transform:scaleX(1.0800);-webkit-text-stroke:0.2px #fff">11</div>
<div class="t" style="left:8.80px;top:444.80px;font-size:13.7px;color:#fff;transform:scaleX(1.0000);-webkit-text-stroke:0.2px #fff">12</div>
<div class="t" style="left:8.82px;top:464.90px;font-size:13.7px;color:#fff;transform:scaleX(0.9818);-webkit-text-stroke:0.2px #fff;height:5.10px;overflow:hidden">13</div>
<div class="t" style="left:102.07px;top:263.04px;font-size:14.5px;color:#0a0a0a;transform:scaleX(0.9095);-webkit-text-stroke:0.25px #0a0a0a">Jurassic Park</div>
<div class="t" style="left:273.19px;top:263.04px;font-size:14.5px;color:#0a0a0a;transform:scaleX(0.8092);-webkit-text-stroke:0.25px #0a0a0a">=TEXTBEFORE(</div>
<div class="t" style="left:363.46px;top:263.04px;font-size:14.5px;color:#5b9fd8;transform:scaleX(0.9125);-webkit-text-stroke:0.2px #5b9fd8">B3</div>
<div class="t" style="left:379.49px;top:263.04px;font-size:14.5px;color:#0a0a0a;transform:scaleX(0.9716);-webkit-text-stroke:0.25px #0a0a0a">,"park",50,1)</div>
<div class="t" style="left:99.53px;top:478.00px;font-size:12px;color:#fff;transform:scaleX(0.9379);-webkit-text-stroke:0.2px #fff">example 1 and 2</div>
<div class="t" style="left:203.02px;top:474.70px;font-size:12px;color:#111;transform:scaleX(0.9633)">example 3</div>
<div class="t" style="left:11.40px;top:501.01px;font-size:9.2px;color:#e8e8e8;transform:scaleX(0.9267);-webkit-text-stroke:0.2px #e8e8e8">Edit</div>
<div class="t" style="left:90.00px;top:500.71px;font-size:9.2px;color:#e8e8e8;transform:scaleX(0.9147);-webkit-text-stroke:0.2px #e8e8e8">Accessibility: Good to go</div>
<div class="t" style="left:683.23px;top:500.48px;font-size:9.6px;color:#505050;transform:scaleX(0.8936)">100%</div>

<!-- red ellipse annotation -->
<svg style="left:0;top:0" width="720" height="515" viewBox="0 0 720 515" fill="none"><rect x="262.5" y="252.05" width="220.5" height="30.95" stroke="#d01f2b" stroke-width="2.5"/><ellipse cx="380.2" cy="160.8" rx="11.8" ry="16" stroke="#d01c2a" stroke-width="2.2"/></svg>

</body></html>
